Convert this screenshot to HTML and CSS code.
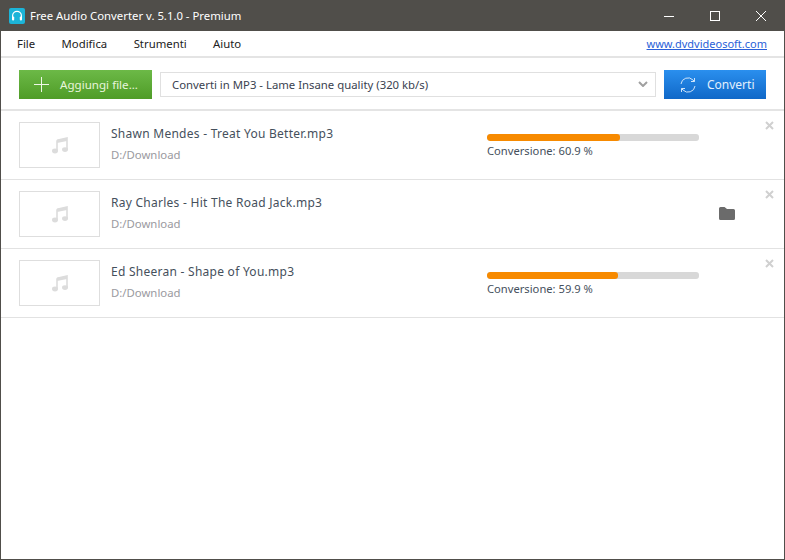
FILE: index.html
```html
<!DOCTYPE html>
<html lang="it">
<head>
<meta charset="utf-8">
<title>Free Audio Converter</title>
<link rel="stylesheet" href="styles.css">
</head>
<body>
<div class="window">
  <header class="titlebar">
    <svg class="app-icon" width="16" height="16" viewBox="0 0 16 16"><rect width="16" height="16" rx="2" fill="#1cb4d8"/><path d="M3.600 10V7.800a4.400 4.400 0 0 1 8.800 0V10" fill="none" stroke="#fff" stroke-width="1.200"/><rect x="3" y="8.500" width="2.200" height="4" rx="1" fill="#fff"/><rect x="10.800" y="8.500" width="2.200" height="4" rx="1" fill="#fff"/></svg>
    <span class="title">Free Audio Converter v. 5.1.0 - Premium</span>
    <div class="winctl">
      <svg width="46" height="30" viewBox="0 0 46 30"><path d="M18 15.500h10" stroke="#fff" fill="none"/></svg>
      <svg width="46" height="30" viewBox="0 0 46 30"><rect x="18.500" y="10.500" width="9" height="9" stroke="#fff" fill="none"/></svg>
      <svg width="46" height="30" viewBox="0 0 46 30"><path d="M18 10l10 10M28 10L18 20" stroke="#fff" fill="none"/></svg>
    </div>
  </header>
  <nav class="menubar">
    <span class="menu-item">File</span>
    <span class="menu-item">Modifica</span>
    <span class="menu-item">Strumenti</span>
    <span class="menu-item">Aiuto</span>
    <a class="site-link" href="#">www.dvdvideosoft.com</a>
  </nav>
  <section class="toolbar">
    <button class="btn btn-add">
      <svg width="15" height="15" viewBox="0 0 15 15"><path d="M7.500 0v15M0 7.500h15" stroke="#eef7e6" fill="none"/></svg>
      <span>Aggiungi file...</span>
    </button>
    <div class="select">
      <span>Converti in MP3 - Lame Insane quality (320 kb/s)</span>
      <svg width="10" height="6" viewBox="0 0 10 6"><path d="M1 1l4 4 4-4" stroke="#a0a0a0" stroke-width="2" fill="none"/></svg>
    </div>
    <button class="btn btn-convert">
      <svg width="16" height="16" viewBox="0 0 16 16"><path d="M1 7a7 7 0 0 1 12-4l1.500 1.500M15 9a7 7 0 0 1-12 4l-1.500-1.500M14.500 1v3.500H11M1.500 15v-3.500H5" stroke="#cfe4fa" fill="none"/></svg>
      <span>Converti</span>
    </button>
  </section>
  <main class="list">
    <article class="row">
      <div class="thumb"><svg width="16" height="17" viewBox="0 0 16 17"><path d="M5 3.200L15 1v11.500" stroke="#dcdcdc" stroke-width="1.600" fill="none"/><path d="M5 3.200V14" stroke="#dcdcdc" stroke-width="1.600" fill="none"/><path d="M5 3L15 1v3L5 6z" fill="#dcdcdc"/><ellipse cx="3" cy="14" rx="3" ry="2.400" fill="#dcdcdc"/><ellipse cx="13" cy="12.600" rx="3" ry="2.400" fill="#dcdcdc"/></svg></div>
      <div class="info"><div class="name">Shawn Mendes - Treat You Better.mp3</div><div class="path">D:/Download</div></div>
      <div class="progress-box"><div class="bar"><div class="fill" style="width:62.7%"></div></div><div class="status">Conversione: 60.9 %</div></div>
      <svg class="close" width="9" height="9" viewBox="0 0 9 9"><path d="M1 1l7 7M8 1L1 8" stroke="#d0d0d0" stroke-width="2" fill="none"/></svg>
    </article>
    <article class="row">
      <div class="thumb"><svg width="16" height="17" viewBox="0 0 16 17"><path d="M5 3.200L15 1v11.500" stroke="#dcdcdc" stroke-width="1.600" fill="none"/><path d="M5 3.200V14" stroke="#dcdcdc" stroke-width="1.600" fill="none"/><path d="M5 3L15 1v3L5 6z" fill="#dcdcdc"/><ellipse cx="3" cy="14" rx="3" ry="2.400" fill="#dcdcdc"/><ellipse cx="13" cy="12.600" rx="3" ry="2.400" fill="#dcdcdc"/></svg></div>
      <div class="info"><div class="name">Ray Charles - Hit The Road Jack.mp3</div><div class="path">D:/Download</div></div>
      <svg class="folder" width="16" height="13" viewBox="0 0 16 13"><path d="M0 1.500A1.500 1.500 0 0 1 1.500 0h4L8 2h6.500A1.500 1.500 0 0 1 16 3.500v8a1.500 1.500 0 0 1-1.500 1.500h-13A1.500 1.500 0 0 1 0 11.500z" fill="#6b6b6b"/></svg>
      <svg class="close" width="9" height="9" viewBox="0 0 9 9"><path d="M1 1l7 7M8 1L1 8" stroke="#d0d0d0" stroke-width="2" fill="none"/></svg>
    </article>
    <article class="row">
      <div class="thumb"><svg width="16" height="17" viewBox="0 0 16 17"><path d="M5 3.200L15 1v11.500" stroke="#dcdcdc" stroke-width="1.600" fill="none"/><path d="M5 3.200V14" stroke="#dcdcdc" stroke-width="1.600" fill="none"/><path d="M5 3L15 1v3L5 6z" fill="#dcdcdc"/><ellipse cx="3" cy="14" rx="3" ry="2.400" fill="#dcdcdc"/><ellipse cx="13" cy="12.600" rx="3" ry="2.400" fill="#dcdcdc"/></svg></div>
      <div class="info"><div class="name">Ed Sheeran - Shape of You.mp3</div><div class="path">D:/Download</div></div>
      <div class="progress-box"><div class="bar"><div class="fill" style="width:61.8%"></div></div><div class="status">Conversione: 59.9 %</div></div>
      <svg class="close" width="9" height="9" viewBox="0 0 9 9"><path d="M1 1l7 7M8 1L1 8" stroke="#d0d0d0" stroke-width="2" fill="none"/></svg>
    </article>
  </main>
</div>
</body>
</html>
```
FILE: styles.css
```css
* { box-sizing: border-box; }
html, body { margin: 0; height: 100%; }
body { font-family: "Noto Sans", sans-serif; font-size: 11.35px; color: #333; background: #fff; }
.window { width: 785px; height: 560px; display: flex; flex-direction: column; border: 1px solid #504e4a; border-top: 0; overflow: hidden; }
.titlebar { height: 31px; background: #504e4a; color: #fff; display: flex; align-items: center; padding-left: 8px; flex: none; }
.app-icon { flex: none; }
.title { margin-left: 5px; font-size: 11.35px; }
.winctl { margin-left: auto; display: flex; }
.winctl svg { display: block; }
.menubar { height: 27px; display: flex; align-items: center; padding: 0 17px 0 16px; border-bottom: 2px solid #e4e4e4; flex: none; color: #222; }
.menu-item { margin-right: 26.4px; }
.site-link { margin-left: auto; color: #2a5fd8; font-size: 11px; }
.toolbar { height: 53px; display: flex; align-items: flex-start; padding: 12px 18px 0; border-bottom: 2px solid #e4e4e4; flex: none; }
.btn { height: 29px; border: 0; color: #fff; display: flex; align-items: center; font: inherit; padding: 0; }
.btn-add { width: 133px; background: linear-gradient(#6cb947, #4f9c27); padding-left: 15px; gap: 11px; color: #e8f5dc; font-size: 11.6px; }
.btn-convert { width: 102px; background: linear-gradient(#2a8fee, #1068c8); padding-left: 16px; gap: 11px; color: #e2effc; font-size: 12px; }
.select { width: 496px; height: 25px; margin: 2px 8px 0; border: 1px solid #e0e0e0; display: flex; align-items: center; justify-content: space-between; padding: 0 7px 1px 11px; color: #3a4250; }
.list { flex: 1; }
.row { height: 69px; border-bottom: 1px solid #e2e2e2; display: flex; align-items: center; padding-left: 18px; position: relative; }
.thumb { width: 81px; height: 46px; border: 1px solid #dedede; display: flex; align-items: center; justify-content: center; flex: none; }
.info { width: 376px; margin-left: 11px; padding-bottom: 3px; }
.name { font-size: 12px; color: #45505c; letter-spacing: .26px; }
.path { margin-top: 5px; color: #9a9aa0; }
.progress-box { width: 212px; padding-top: 3px; }
.bar { height: 7px; border-radius: 3px; background: #d8d8d8; overflow: hidden; }
.fill { height: 100%; background: #f78a00; border-radius: 3px; }
.status { color: #45505c; font-size: 11.2px; line-height: 16px; margin-top: 2px; }
.folder { margin: 0 0 2px 232px; }
.close { position: absolute; top: 10px; right: 10px; }
```
